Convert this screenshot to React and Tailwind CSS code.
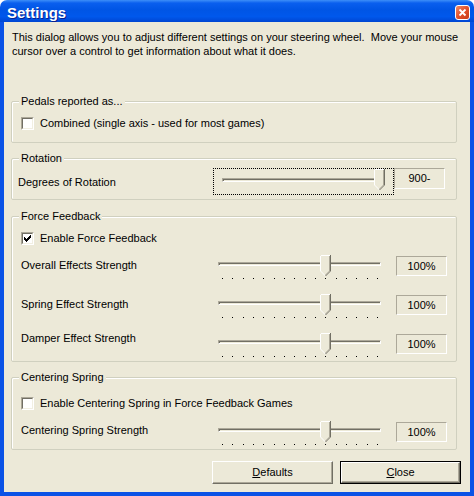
import React from "react";

const TICKS = Array.from({ length: 16 }, (_, i) => 9 + Math.round((i * 155) / 15));

// classic 7x7 check glyph, one row per string
const CHECK = ["......X", ".....XX", "X...XXX", "XX.XXX.", "XXXXX..", ".XXX...", "..X...."];

function Thumb() {
    return (
        <svg width="11" height="22" viewBox="0 0 11 22" className="absolute top-0" shapeRendering="crispEdges">
            <polygon points="0,0 11,0 11,16 5.5,21.5 0,16" fill="#ECE9D8" />
            <path d="M0.5 0.5H10M0.5 0.5V16" stroke="#FFFFFF" fill="none" />
            <path d="M0.5 16L5.5 21" stroke="#FFFFFF" fill="none" shapeRendering="auto" />
            <path d="M10.5 0V16" stroke="#716F64" fill="none" />
            <path d="M10.5 16L5.5 21" stroke="#716F64" fill="none" shapeRendering="auto" />
            <path d="M9.5 1V16" stroke="#ACA899" fill="none" />
            <path d="M9.5 16L5.5 20" stroke="#ACA899" fill="none" shapeRendering="auto" />
        </svg>
    );
}

function Track({ left, top, width }) {
    return (
        <div
            className="absolute h-[4px] border border-t-[#ACA899] border-l-[#ACA899] border-b-white border-r-white bg-[#ECE9D8] shadow-[inset_1px_1px_0_#716F64]"
            style={{ left, top, width }}
        />
    );
}

function Slider({ pos }) {
    // range 0..150, tick every 10
    const thumbLeft = 9 + Math.round((pos / 150) * 155) - 5;
    return (
        <div className="relative w-[173px] h-[26px] shrink-0">
            <Track left={5} top={7} width={163} />
            <div className="absolute top-0" style={{ left: thumbLeft }}>
                <Thumb />
            </div>
            {TICKS.map((x) => (
                <div key={x} className="absolute top-[23px] w-px h-px bg-black" style={{ left: x }} />
            ))}
        </div>
    );
}

function ValueBox({ children, className = "" }) {
    return (
        <div className={`shrink-0 w-[51px] h-[20px] flex items-center justify-center border border-t-[#ACA899] border-l-[#ACA899] border-b-white border-r-white ${className}`}>
            {children}
        </div>
    );
}

function Checkbox({ checked }) {
    return (
        <div className="w-[13px] h-[13px] shrink-0 border border-t-[#ACA899] border-l-[#ACA899] border-b-white border-r-white">
            <div className="w-full h-full bg-white border border-t-[#716F64] border-l-[#716F64] border-b-[#F1EFE2] border-r-[#F1EFE2]">
                {checked && (
                    <svg width="9" height="9" viewBox="0 0 9 9" shapeRendering="crispEdges" className="block">
                        {CHECK.flatMap((row, y) =>
                            row.split("").map((c, x) =>
                                c === "X" ? <rect key={`${x}-${y}`} x={x + 1} y={y + 1} width="1" height="1" fill="#000" /> : null
                            )
                        )}
                    </svg>
                )}
            </div>
        </div>
    );
}

function Group({ title, className = "", children }) {
    return (
        <div className={`relative w-[446px] border border-[#D0D0BF] rounded-[2px] shadow-[inset_1px_1px_0_white] ${className}`}>
            <span className="absolute left-[7px] top-[-7px] px-[2px] leading-[13px] bg-[#ECE9D8]">{title}</span>
            {children}
        </div>
    );
}

function Button({ children, isDefault }) {
    return (
        <div className={`w-[121px] h-[23px] ${isDefault ? "border border-black" : ""}`}>
            <div className="w-full h-full flex items-center justify-center bg-[#ECE9D8] border border-t-white border-l-white border-b-[#716F64] border-r-[#716F64] shadow-[inset_-1px_-1px_0_#ACA899]">
                {children}
            </div>
        </div>
    );
}

export default function App() {
    return (
        <div className="w-[474px] h-[496px] flex flex-col text-[11px] text-black" style={{ fontFamily: "'Liberation Sans', Arial, sans-serif" }}>
            <div className="h-[22px] shrink-0 rounded-t-[7px] flex items-start justify-between pl-[7px] pr-[4px] bg-[linear-gradient(to_bottom,#3D8EF8_0%,#0A5FEE_14%,#0055E5_45%,#0058EC_75%,#0046D2_100%)]">
                <span className="pt-[4px] leading-[17px] text-[15px] font-bold text-white [text-shadow:1px_1px_0_#0A1F8C]">Settings</span>
                <div className="mt-[5px] w-[15px] h-[15px] rounded-[3px] border border-white bg-[linear-gradient(135deg,#F08A68_0%,#E2512B_50%,#C83A16_100%)] flex items-center justify-center">
                    <svg width="9" height="9" viewBox="0 0 9 9">
                        <path d="M1.5 1.5L7.5 7.5M7.5 1.5L1.5 7.5" stroke="white" strokeWidth="1.8" />
                    </svg>
                </div>
            </div>

            <div className="flex-1 flex flex-col bg-[#ECE9D8] border-x-4 border-b-4 border-[#0A52E6] pl-[7px]">
                <p className="mt-[8px] ml-[1px] leading-[14px]">
                    This dialog allows you to adjust different settings on your steering wheel.{"\u00a0"} Move your mouse
                    <br />
                    cursor over a control to get information about what it does.
                </p>

                <Group title="Pedals reported as..." className="mt-[43px] h-[42px]">
                    <div className="flex items-center gap-[6px] pt-[15px] pl-[9px]">
                        <Checkbox />
                        <span className="leading-[13px]">Combined (single axis - used for most games)</span>
                    </div>
                </Group>

                <Group title="Rotation" className="mt-[15px] h-[42px]">
                    <div className="flex items-start pt-[9px] pl-[6px] pr-[11px]">
                        <span className="flex-1 mt-[8px] leading-[13px]">Degrees of Rotation</span>
                        <div className="relative w-[181px] h-[27px] shrink-0 border border-dotted border-black">
                            <Track left={8} top={9} width={163} />
                            <div className="absolute top-0 left-[160px]">
                                <Thumb />
                            </div>
                        </div>
                        <ValueBox className="w-[51px] h-[21px]">900-</ValueBox>
                    </div>
                </Group>

                <Group title="Force Feedback" className="mt-[16px] h-[146px]">
                    <div className="flex items-center gap-[6px] pt-[15px] pl-[9px]">
                        <Checkbox checked />
                        <span className="leading-[13px]">Enable Force Feedback</span>
                    </div>
                    <div className="flex items-start mt-[10px] pl-[9px] pr-[9px] gap-[10px]">
                        <span className="flex-1 mt-[4px] leading-[13px]">Overall Effects Strength</span>
                        <Slider pos={100} />
                        <ValueBox className="mt-[1px]">100%</ValueBox>
                    </div>
                    <div className="flex items-start mt-[13px] pl-[9px] pr-[9px] gap-[10px]">
                        <span className="flex-1 mt-[4px] leading-[13px]">Spring Effect Strength</span>
                        <Slider pos={100} />
                        <ValueBox className="mt-[1px]">100%</ValueBox>
                    </div>
                    <div className="flex items-start mt-[13px] pl-[9px] pr-[9px] gap-[10px]">
                        <span className="flex-1 mt-[-1px] leading-[13px]">Damper Effect Strength</span>
                        <Slider pos={100} />
                        <ValueBox className="mt-[1px]">100%</ValueBox>
                    </div>
                </Group>

                <Group title="Centering Spring" className="mt-[15px] h-[73px]">
                    <div className="flex items-center gap-[6px] pt-[19px] pl-[9px]">
                        <Checkbox />
                        <span className="leading-[13px]">Enable Centering Spring in Force Feedback Games</span>
                    </div>
                    <div className="flex items-start mt-[11px] pl-[9px] pr-[9px] gap-[10px]">
                        <span className="flex-1 mt-[3px] leading-[13px]">Centering Spring Strength</span>
                        <Slider pos={100} />
                        <ValueBox className="mt-[1px]">100%</ValueBox>
                    </div>
                </Group>

                <div className="flex justify-end gap-[7px] mt-[11px] pr-[9px]">
                    <Button>
                        <span><u>D</u>efaults</span>
                    </Button>
                    <Button isDefault>
                        <span><u>C</u>lose</span>
                    </Button>
                </div>
            </div>
        </div>
    );
}
